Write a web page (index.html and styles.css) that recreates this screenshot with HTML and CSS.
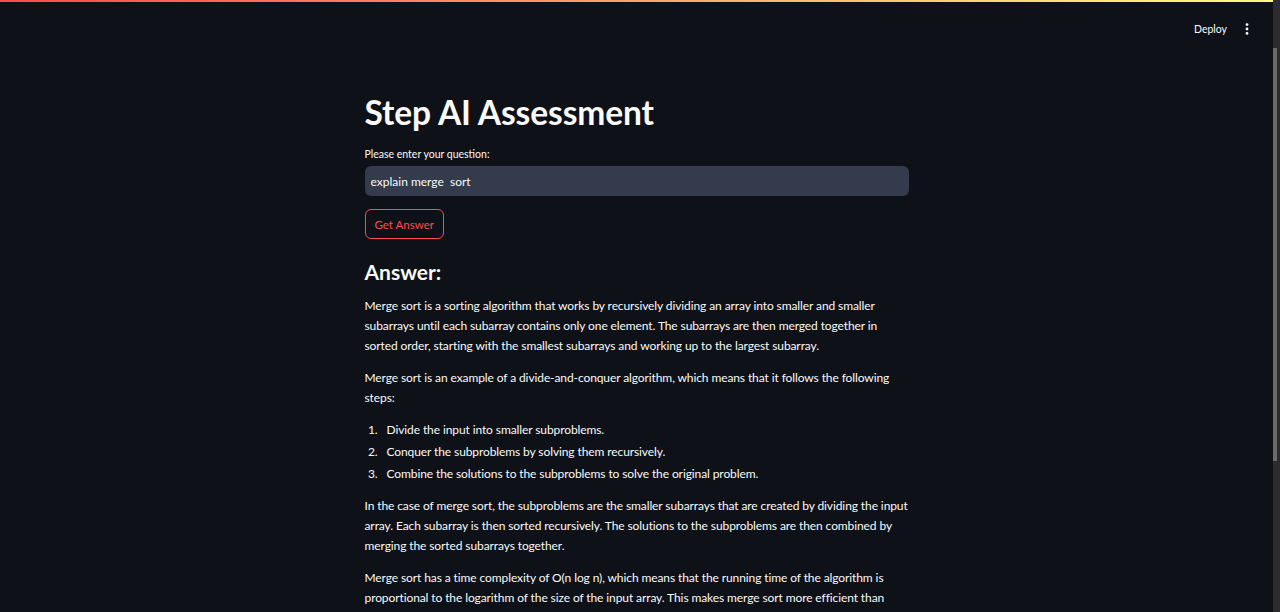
FILE: index.html
```html
<!DOCTYPE html>
<html lang="en">
<head>
<meta charset="utf-8">
<title>Step AI Assessment</title>
<link rel="stylesheet" href="styles.css">
</head>
<body>
<div class="app">
  <div class="viewport">
    <header class="header">
      <div class="decoration"></div>
      <div class="toolbar">
        <span class="deploy">Deploy</span>
        <span class="menu" aria-label="Main menu">
          <svg width="4" height="12" viewBox="0 0 4 12"><circle cx="2" cy="1.6" r="1.4" fill="#fafafa"/><circle cx="2" cy="6" r="1.4" fill="#fafafa"/><circle cx="2" cy="10.4" r="1.4" fill="#fafafa"/></svg>
        </span>
      </div>
    </header>
    <main class="block">
      <h1 class="title">Step AI Assessment</h1>
      <label class="label" for="q">Please enter your question:</label>
      <input class="text-input" id="q" type="text" value="explain merge  sort">
      <button class="btn" type="button">Get Answer</button>
      <h3 class="subheader">Answer:</h3>
      <div class="answer">
        <p>Merge sort is a sorting algorithm that works by recursively dividing an array into smaller and smaller subarrays until each subarray contains only one element. The subarrays are then merged together in sorted order, starting with the smallest subarrays and working up to the largest subarray.</p>
        <p>Merge sort is an example of a divide-and-conquer algorithm, which means that it follows the following steps:</p>
        <ol>
          <li>Divide the input into smaller subproblems.</li>
          <li>Conquer the subproblems by solving them recursively.</li>
          <li>Combine the solutions to the subproblems to solve the original problem.</li>
        </ol>
        <p>In the case of merge sort, the subproblems are the smaller subarrays that are created by dividing the input array. Each subarray is then sorted recursively. The solutions to the subproblems are then combined by merging the sorted subarrays together.</p>
        <p>Merge sort has a time complexity of O(n log n), which means that the running time of the algorithm is proportional to the logarithm of the size of the input array. This makes merge sort more efficient than other sorting algorithms, such as bubble sort and insertion sort, which have a time complexity of O(n^2).</p>
      </div>
    </main>
  </div>
  <div class="scrollbar" aria-hidden="true"><div class="thumb"></div></div>
</div>
</body>
</html>
```
FILE: styles.css
```css
html, body {
  margin: 0;
  padding: 0;
  height: 100%;
  overflow: hidden;
  background: #0e1117;
}

.app {
  height: 612px;
  display: flex;
  background: #0e1117;
  color: #fafafa;
  font-family: Lato, "Liberation Sans", sans-serif;
}

.viewport {
  flex: 1;
  min-width: 0;
  height: 612px;
  overflow: hidden;
}

.scrollbar {
  width: 7px;
  flex-shrink: 0;
  background: #2c2c2e;
  display: flex;
  flex-direction: column;
}

.thumb {
  margin-top: 48px;
  height: 413px;
  width: 4px;
  background: #6b6b6b;
}

.header {
  height: 46px;
  display: flex;
  flex-direction: column;
}

.decoration {
  height: 2px;
  background: linear-gradient(90deg, #ff4b4b, #fffd80);
}

.toolbar {
  flex: 1;
  display: flex;
  align-items: center;
  justify-content: flex-end;
  gap: 18px;
  padding-right: 24px;
  padding-top: 10px;
}

.deploy {
  font-size: 10.5px;
  color: #fafafa;
}

.menu {
  display: flex;
  align-items: center;
  height: 12px;
}

.block {
  width: 544px;
  margin: 0 auto;
  padding: 46px 0 120px;
  display: flex;
  flex-direction: column;
  align-items: flex-start;
}

.title {
  margin: 0;
  font-size: 33.5px;
  font-weight: 700;
  line-height: 40px;
  letter-spacing: -0.1px;
}

.label {
  margin-top: 15px;
  font-size: 10.5px;
  line-height: 14px;
}

.text-input {
  box-sizing: border-box;
  margin-top: 5px;
  width: 544px;
  height: 30px;
  border: none;
  border-radius: 6px;
  background: #343b4c;
  color: #fafafa;
  font-family: inherit;
  font-size: 12px;
  padding: 0 6px;
  outline: none;
}

.btn {
  margin-top: 13px;
  height: 30px;
  padding: 0 9px;
  border: 1px solid #ff4b4b;
  border-radius: 6px;
  background: transparent;
  color: #ff4b4b;
  font-family: inherit;
  font-size: 11.5px;
}

.subheader {
  margin: 19px 0 0;
  font-size: 21px;
  font-weight: 700;
  line-height: 28px;
}

.answer {
  margin-top: 10px;
  font-size: 12px;
  letter-spacing: -0.1px;
  line-height: 20px;
}

.answer p {
  margin: 0 0 12px;
}

.answer ol {
  margin: 0 0 12px;
  padding-left: 16px;
}

.answer li {
  margin-bottom: 2px;
  padding-left: 6px;
}
```
